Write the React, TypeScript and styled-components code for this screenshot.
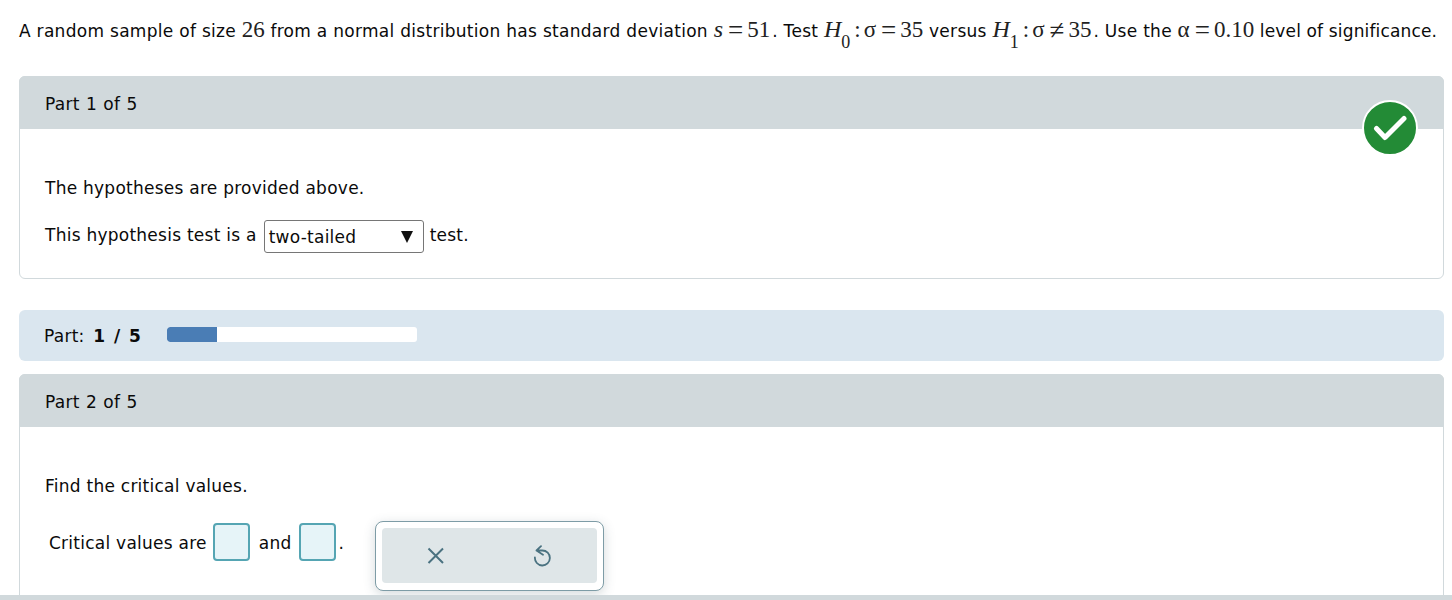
import React from "react";
import styled, { createGlobalStyle } from "styled-components";

const Global = createGlobalStyle`
  html, body { margin: 0; padding: 0; height: 600px; overflow: hidden; background: #fff; }
  body { font-family: "DejaVu Sans", Verdana, sans-serif; font-size: 17px; letter-spacing: 0.25px; color: #0a0a0a; }
  #root { height: 600px; }
`;

const Page = styled.div`
  position: relative;
  height: 600px;
  overflow: hidden;
  padding: 0 8px 0 19px;
  box-sizing: border-box;
`;

const Problem = styled.div`
  height: 76px;
  box-sizing: border-box;
  padding-top: 17px;
  line-height: 24px;
  white-space: nowrap;
  letter-spacing: 0.29px;
`;

const M = styled.span`
  font-family: "Liberation Serif", "Times New Roman", serif;
  font-size: 23px;
  letter-spacing: 0;
  color: #222;
`;

const Rel = styled.span`
  font-family: "Liberation Serif", "Times New Roman", serif;
  font-size: 27px;
  letter-spacing: 0;
  line-height: 0;
  vertical-align: -2px;
  margin: 0 4px 0 5px;
  color: #222;
`;

const Colon = styled(M)`
  margin: 0 3px 0 4px;
`;

const Dot = styled.span`
  margin-left: 2px;
`;

const Tail = styled.span`
  letter-spacing: 0.15px;
`;

const I = styled.i`
  font-family: "Liberation Serif", "Times New Roman", serif;
  font-size: 24px;
  letter-spacing: 0;
  color: #222;
`;

const Sub = styled.sub`
  font-family: "Liberation Serif", "Times New Roman", serif;
  font-size: 18px;
  letter-spacing: 0;
  line-height: 0;
  vertical-align: -11px;
  color: #222;
`;

const Card = styled.section`
  position: relative;
  border: 1px solid #d1d9dc;
  border-radius: 6px;
  box-sizing: border-box;
  background: #fff;
`;

const CardHead = styled.header`
  height: 53px;
  margin: -1px -1px 0;
  padding: 2px 26px 0;
  box-sizing: border-box;
  display: flex;
  align-items: center;
  background: #d1d9dc;
  border-radius: 6px 6px 0 0;
  word-spacing: 0.7px;
`;

const Badge = styled.div`
  position: absolute;
  right: 25px;
  top: 23px;
  width: 56px;
  height: 56px;
  box-sizing: border-box;
  border: 2px solid #fff;
  border-radius: 50%;
  background: #238b36;
  display: flex;
  align-items: center;
  justify-content: center;
`;

const CardBody = styled.div<{ $height: number }>`
  height: ${(p) => p.$height}px;
  box-sizing: border-box;
  padding: 47px 25px 0;
`;

const Line = styled.div<{ $mt?: number; $ml?: number }>`
  display: flex;
  align-items: center;
  margin-top: ${(p) => p.$mt ?? 0}px;
  margin-left: ${(p) => p.$ml ?? 0}px;
  line-height: 24px;
  white-space: pre;
`;

const SelectBox = styled.div`
  width: 160px;
  height: 33px;
  box-sizing: border-box;
  margin: 3px 6px 0 7px;
  padding: 0 10px 0 4px;
  border: 1px solid #767676;
  border-radius: 3px;
  display: flex;
  align-items: center;
  justify-content: space-between;
  background: #fff;
`;

const Arrow = styled.span`
  width: 0;
  height: 0;
  border-left: 6.5px solid transparent;
  border-right: 6.5px solid transparent;
  border-top: 12px solid #111;
`;

const Progress = styled.div`
  height: 51px;
  margin: 31px 0 13px;
  padding: 0 25px;
  border-radius: 6px;
  background: #dae6ef;
  display: flex;
  align-items: center;
`;

const ProgressLabel = styled.span`
  width: 123px;
  b { font-weight: 700; letter-spacing: 1px; word-spacing: 1px; margin-left: 3px; }
`;

const Track = styled.div`
  width: 250px;
  height: 15px;
  margin: -1px 0 2px;
  border-radius: 3px;
  background: #fff;
  overflow: hidden;
`;

const Fill = styled.div`
  height: 100%;
  background: #4a7db5;
  border-radius: 3px 0 0 3px;
`;

const AnswerBox = styled.span<{ $ml: number; $mr: number }>`
  display: inline-block;
  width: 37px;
  height: 38px;
  box-sizing: border-box;
  margin: 0 ${(p) => p.$mr}px 2px ${(p) => p.$ml}px;
  border: 2px solid #55a5b3;
  border-radius: 4px;
  background: #e6f4f8;
`;

const Tools = styled.div`
  position: absolute;
  left: 375px;
  top: 521px;
  width: 229px;
  height: 70px;
  box-sizing: border-box;
  padding: 6px;
  background: #fff;
  border: 1px solid #7e9ca6;
  border-radius: 8px;
  box-shadow: 0 3px 12px rgba(60, 80, 90, 0.22);
`;

const ToolsInner = styled.div`
  height: 55px;
  border-radius: 4px;
  background: #dfe6e8;
  display: flex;
  align-items: center;
`;

const ToolButton = styled.span`
  width: 108px;
  display: flex;
  justify-content: center;
  align-items: center;
  color: #4a7280;
`;

const BottomBar = styled.div`
  position: absolute;
  left: 0;
  right: 0;
  bottom: 0;
  height: 5px;
  background: #d1d9dc;
`;

export default function App() {
  return (
    <Page>
      <Global />
      <Problem>
        A random sample of size <M>26</M> from a normal distribution has standard deviation <I>s</I>
        <Rel>=</Rel>
        <M>51</M>
        <Dot>.</Dot> Test <I>H</I>
        <Sub>0</Sub>
        <Colon>:</Colon>
        <M>σ</M>
        <Rel>=</Rel>
        <M>35</M> versus <I>H</I>
        <Sub>1</Sub>
        <Colon>:</Colon>
        <M>σ</M>
        <Rel>≠</Rel>
        <M>35</M>
        <Dot>.</Dot> Use the <M>α</M>
        <Rel>=</Rel>
        <M>0.10</M> <Tail>level of significance.</Tail>
      </Problem>
      <Card>
        <CardHead>Part 1 of 5</CardHead>
        <Badge>
          <svg width="34" height="34" viewBox="0 0 34 34" fill="none">
            <path d="M3.5 17.5 L12 26.5 L31 7.5" stroke="#fff" strokeWidth="5" strokeLinecap="round" strokeLinejoin="round" />
          </svg>
        </Badge>
        <CardBody $height={149}>
          <Line>The hypotheses are provided above.</Line>
          <Line $mt={17}>
            This hypothesis test is a
            <SelectBox>
              two-tailed
              <Arrow />
            </SelectBox>
            test.
          </Line>
        </CardBody>
      </Card>
      <Progress>
        <ProgressLabel>
          Part: <b>1 / 5</b>
        </ProgressLabel>
        <Track>
          <Fill style={{ width: `${(1 / 5) * 100}%` }} />
        </Track>
      </Progress>
      <Card>
        <CardHead>Part 2 of 5</CardHead>
        <CardBody $height={240}>
          <Line>Find the critical values.</Line>
          <Line $mt={25} $ml={4}>
            Critical values are
            <AnswerBox $ml={6} $mr={9} />
            and
            <AnswerBox $ml={7} $mr={3} />.
          </Line>
        </CardBody>
      </Card>
      <Tools>
        <ToolsInner>
          <ToolButton>
            <svg width="20" height="20" viewBox="0 0 20 20" fill="none" stroke="currentColor" strokeWidth="2">
              <path d="M2.5 2.5 L17 17 M17 2.5 L2.5 17" />
            </svg>
          </ToolButton>
          <ToolButton>
            <svg width="20" height="22" viewBox="0 0 20 22" fill="none" stroke="currentColor" strokeWidth="1.8" strokeLinecap="round" strokeLinejoin="round">
              <path d="M8 1.2 L3.5 5.5 L10 9.7 M3.5 5.5 H9.3 A7.5 7.5 0 1 1 1.9 12.5" />
            </svg>
          </ToolButton>
        </ToolsInner>
      </Tools>
      <BottomBar />
    </Page>
  );
}
